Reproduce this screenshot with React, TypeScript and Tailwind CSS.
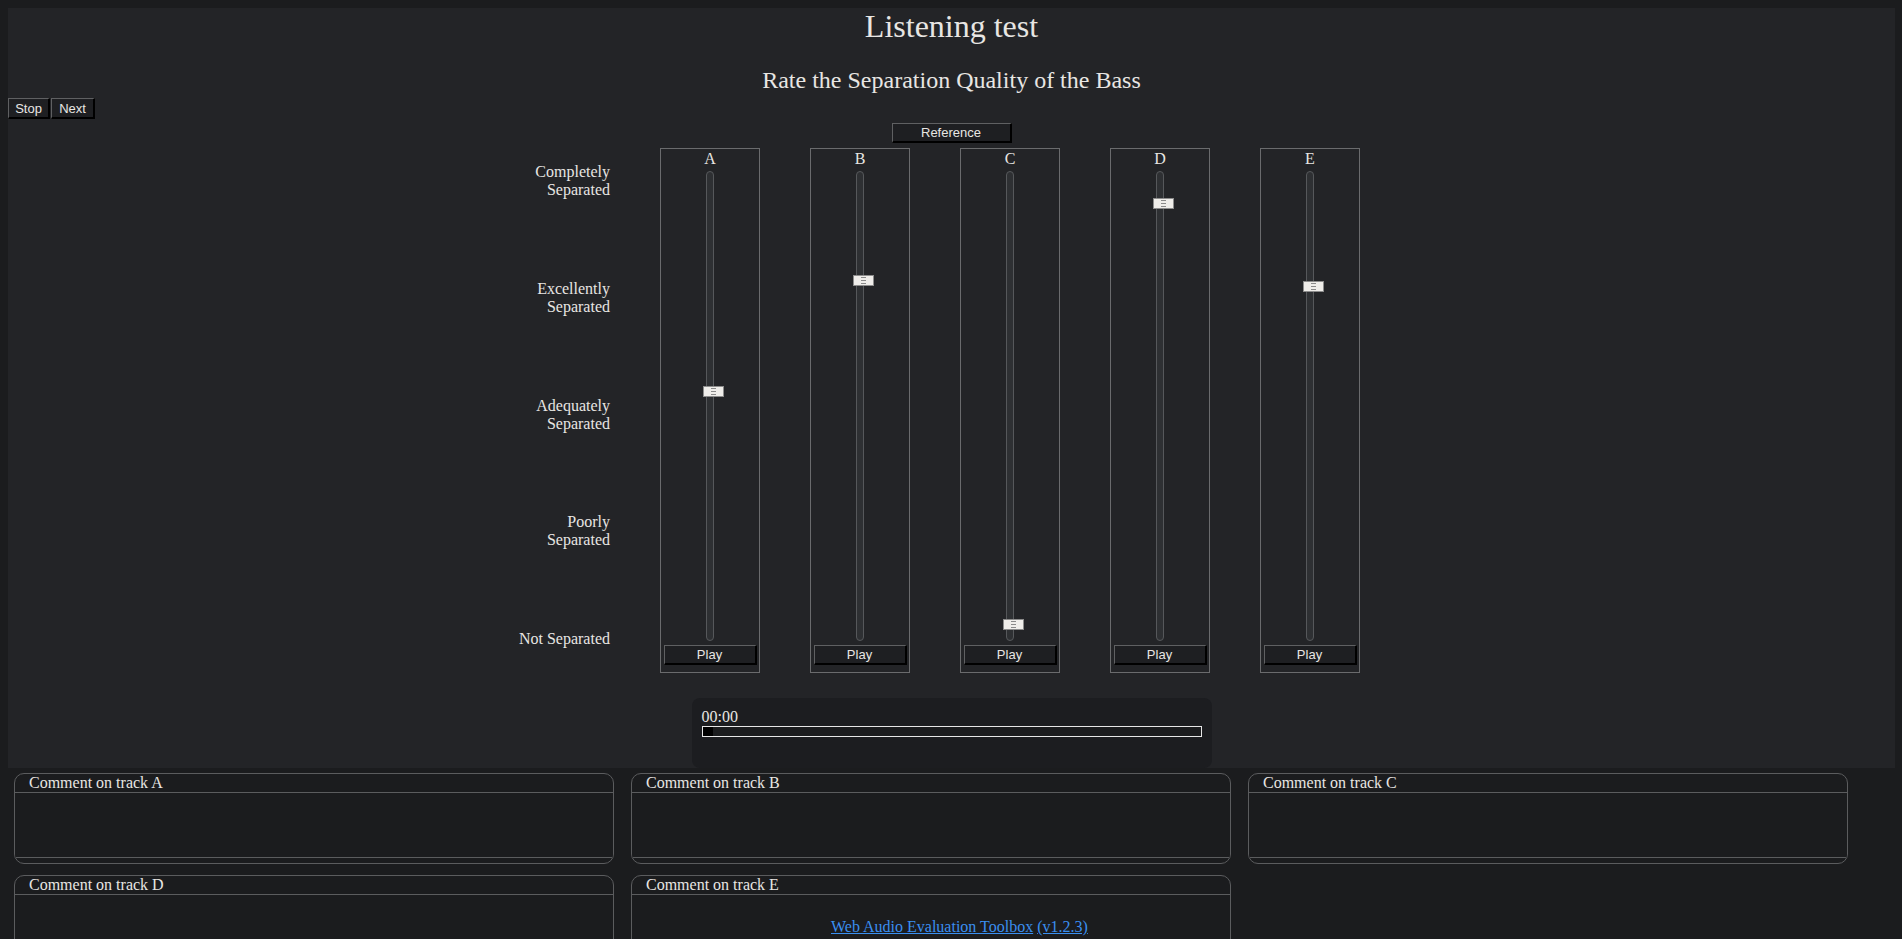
import React from "react";

const serif = "font-['Liberation_Serif',serif]";
const sans = "font-['Liberation_Sans',Arial,sans-serif]";

function Btn({ children, className = "" }: { children: React.ReactNode; className?: string }) {
  return (
    <button
      className={`flex items-center justify-center bg-[#1e1f22] text-[#e8e6e3] text-[13px] leading-none ${sans} border-t border-l border-t-[#5f6062] border-l-[#5f6062] border-r-2 border-b-2 border-r-black border-b-black ${className}`}
    >
      {children}
    </button>
  );
}

const tracks = [
  { name: "A", top: 214 },
  { name: "B", top: 103 },
  { name: "C", top: 447 },
  { name: "D", top: 26 },
  { name: "E", top: 109 },
];

const labels: React.ReactNode[] = [
  <>Completely<br />Separated</>,
  <>Excellently<br />Separated</>,
  <>Adequately<br />Separated</>,
  <>Poorly<br />Separated</>,
  <>Not Separated</>,
];

function SliderBox({ name, top }: { name: string; top: number }) {
  return (
    <div className="w-[100px] h-[525px] border border-[#6a6b6d] flex flex-col items-center pt-[1px] pb-[7px]">
      <div className="text-[16px] leading-[18px] h-[18px] text-[#e8e6e3]">{name}</div>
      <div className="relative mt-[3px] w-[8px] h-[470px] rounded-full border border-[#56585b] bg-[#2e3033]">
        <div
          className="absolute left-[-4px] w-[21px] h-[11px] bg-[#efedea] border border-[#8c8c8c] flex flex-col items-center justify-center gap-[2px]"
          style={{ top: top }}
        >
          <div className="w-[5px] h-[1px] bg-[#8a8a8a]" />
          <div className="w-[5px] h-[1px] bg-[#8a8a8a]" />
          <div className="w-[5px] h-[1px] bg-[#8a8a8a]" />
        </div>
      </div>
      <Btn className="mt-[4px] w-[93px] h-[20px]">Play</Btn>
    </div>
  );
}

function CommentBox({ letter }: { letter: string }) {
  return (
    <div className="w-[600px] h-[91px] rounded-[10px] border border-[#5b5c5e] bg-[#1b1c1e] flex flex-col overflow-hidden">
      <div className="h-[18px] leading-[18px] text-[16px] pl-[14px] text-[#e8e6e3]">Comment on track {letter}</div>
      <div className="h-[66px] border-y border-[#5b5c5e] bg-[#1b1c1e]" />
      <div className="flex-1" />
    </div>
  );
}

export default function App() {
  return (
    <div className={`relative w-full h-[939px] overflow-hidden bg-[#1b1c1e] text-[#e8e6e3] ${serif}`}>
      <div className="pt-[8px] pl-[8px]">
        <div className="w-[1887px] h-[760px] bg-[#232427] flex flex-col">
          <h1 className="text-[32px] leading-[37px] text-center font-normal">Listening test</h1>
          <h2 className="mt-[22px] text-[24px] leading-[27px] text-center font-normal">
            Rate the Separation Quality of the Bass
          </h2>
          <div className="mt-[4px] flex gap-[1px]">
            <Btn className="w-[42px] h-[21px]">Stop</Btn>
            <Btn className="w-[44px] h-[21px]">Next</Btn>
          </div>
          <div className="mt-[4px] flex justify-center">
            <Btn className="w-[120px] h-[20px]">Reference</Btn>
          </div>
          <div className="mt-[5px] flex pl-[502px]">
            <div className="mt-[15px] w-[100px] h-[485px] mr-[50px] flex flex-col justify-between items-end text-right text-[16px] leading-[18px] whitespace-nowrap">
              {labels.map((l, i) => (
                <div key={i}>{l}</div>
              ))}
            </div>
            <div className="flex gap-[50px]">
              {tracks.map((t) => (
                <SliderBox key={t.name} name={t.name} top={t.top} />
              ))}
            </div>
          </div>
          <div className="mt-[25px] flex justify-center">
            <div className="w-[520px] h-[70px] rounded-[8px] bg-[#1c1d20] px-[10px] pt-[10px]">
              <div className="text-[16px] leading-[18px]">00:00</div>
              <div className="h-[11px] border border-[#e6e6e6] bg-[#1b1c1e] flex">
                <div className="w-[10px] h-full bg-black" />
              </div>
            </div>
          </div>
        </div>
      </div>
      <div className="mt-[5px] pl-[14px] grid grid-cols-[600px_600px_600px] gap-x-[17px] gap-y-[11px]">
        {["A", "B", "C", "D", "E"].map((l) => (
          <CommentBox key={l} letter={l} />
        ))}
      </div>
      <div className="absolute left-[831px] top-[918px] text-[16px] leading-[18px] text-[#3a8ff0] whitespace-nowrap">
        <a className="underline" href="#">Web Audio Evaluation Toolbox</a>{" "}
        <a className="underline" href="#">(v1.2.3)</a>
      </div>
    </div>
  );
}
